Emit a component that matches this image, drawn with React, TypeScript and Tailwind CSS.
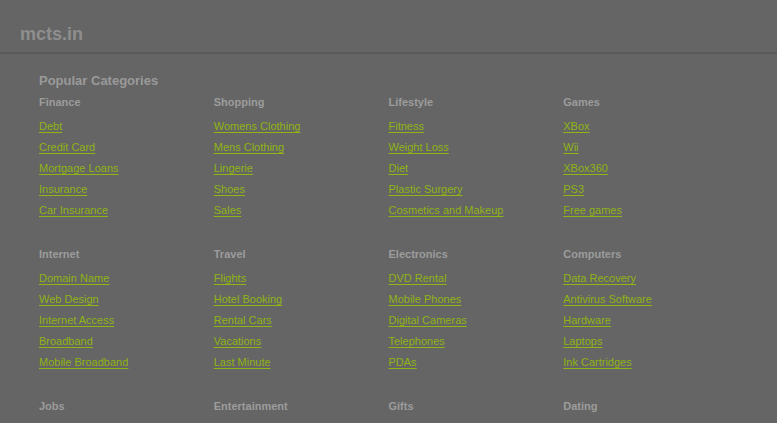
import React from "react";

type Cat = { title: string; links: string[] };

const sections: Cat[][] = [
  [
    { title: "Finance", links: ["Debt", "Credit Card", "Mortgage Loans", "Insurance", "Car Insurance"] },
    { title: "Shopping", links: ["Womens Clothing", "Mens Clothing", "Lingerie", "Shoes", "Sales"] },
    { title: "Lifestyle", links: ["Fitness", "Weight Loss", "Diet", "Plastic Surgery", "Cosmetics and Makeup"] },
    { title: "Games", links: ["XBox", "Wii", "XBox360", "PS3", "Free games"] },
  ],
  [
    { title: "Internet", links: ["Domain Name", "Web Design", "Internet Access", "Broadband", "Mobile Broadband"] },
    { title: "Travel", links: ["Flights", "Hotel Booking", "Rental Cars", "Vacations", "Last Minute"] },
    { title: "Electronics", links: ["DVD Rental", "Mobile Phones", "Digital Cameras", "Telephones", "PDAs"] },
    { title: "Computers", links: ["Data Recovery", "Antivirus Software", "Hardware", "Laptops", "Ink Cartridges"] },
  ],
  [
    { title: "Jobs", links: [] },
    { title: "Entertainment", links: [] },
    { title: "Gifts", links: [] },
    { title: "Dating", links: [] },
  ],
];

export default function App() {
  return (
    <div
      className="h-screen overflow-hidden bg-[#656565]"
      style={{ fontFamily: '"Liberation Sans", Arial, sans-serif' }}
    >
      <header className="h-[54px] pl-5 pt-[25px] border-b-2 border-[#595959]">
        <h1 className="text-[18px] leading-[18px] font-bold text-[#8e8e8e]">mcts.in</h1>
      </header>
      <main className="px-[39px] pt-[20px]">
        <h2 className="text-[13px] leading-[13px] font-bold text-[#9a9a9a]">Popular Categories</h2>
        <div className="mt-[10px] w-[699px] flex flex-col gap-[28px]">
          {sections.map((row, i) => (
            <div key={i} className="grid grid-cols-4">
              {row.map((cat) => (
                <div key={cat.title}>
                  <h3 className="text-[11px] leading-[11px] font-bold text-[#9c9c9c]">{cat.title}</h3>
                  {cat.links.length > 0 && (
                    <ul className="mt-[8px]">
                      {cat.links.map((l) => (
                        <li key={l} className="text-[11px] leading-[21px]">
                          <a
                            href="#"
                            className="text-[#8fb414] underline underline-offset-2"
                          >
                            {l}
                          </a>
                        </li>
                      ))}
                    </ul>
                  )}
                </div>
              ))}
            </div>
          ))}
        </div>
      </main>
    </div>
  );
}
